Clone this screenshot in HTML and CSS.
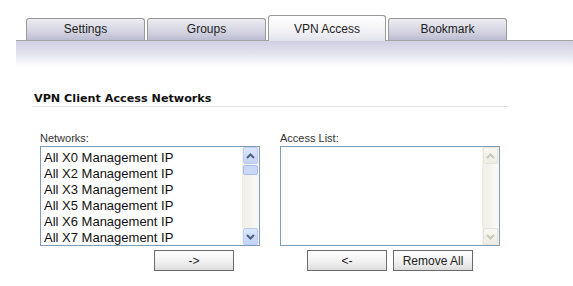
FILE: index.html
```html
<!DOCTYPE html>
<html lang="en">
<head>
    <meta charset="UTF-8">
    <title>VPN Access</title>
    <link rel="stylesheet" href="styles.css">
</head>
<body>
    <!-- Tab strip -->
    <div class="tabbar">
        <div class="tabs">
            <div class="tab">Settings</div>
            <div class="tab">Groups</div>
            <div class="tab active">VPN Access</div>
            <div class="tab">Bookmark</div>
        </div>
        <div class="band"></div>
    </div>

    <div class="section">
        <h3 class="section-title">VPN Client Access Networks</h3>

        <div class="columns">
            <div class="column">
                <div class="label">Networks:</div>
                <div class="listbox">
                    <div class="items">
                        <div class="item">All X0 Management IP</div>
                        <div class="item">All X2 Management IP</div>
                        <div class="item">All X3 Management IP</div>
                        <div class="item">All X5 Management IP</div>
                        <div class="item">All X6 Management IP</div>
                        <div class="item">All X7 Management IP</div>
                    </div>
                    <div class="scrollbar">
                        <div class="sb-btn"><svg width="9" height="6" viewBox="0 0 9 6"><path d="M1 5 L4.5 1.5 L8 5" fill="none" stroke="#4d6185" stroke-width="2"/></svg></div>
                        <div class="sb-track"><div class="sb-thumb"></div></div>
                        <div class="sb-btn"><svg width="9" height="6" viewBox="0 0 9 6"><path d="M1 1 L4.5 4.5 L8 1" fill="none" stroke="#4d6185" stroke-width="2"/></svg></div>
                    </div>
                </div>
                <div class="buttons left-buttons">
                    <button class="btn">-&gt;</button>
                </div>
            </div>

            <div class="column">
                <div class="label">Access List:</div>
                <div class="listbox">
                    <div class="items"></div>
                    <div class="scrollbar disabled">
                        <div class="sb-btn"><svg width="9" height="6" viewBox="0 0 9 6"><path d="M1 5 L4.5 1.5 L8 5" fill="none" stroke="#c9c7ba" stroke-width="2"/></svg></div>
                        <div class="sb-track"></div>
                        <div class="sb-btn"><svg width="9" height="6" viewBox="0 0 9 6"><path d="M1 1 L4.5 4.5 L8 1" fill="none" stroke="#c9c7ba" stroke-width="2"/></svg></div>
                    </div>
                </div>
                <div class="buttons right-buttons">
                    <button class="btn">&lt;-</button>
                    <button class="btn">Remove All</button>
                </div>
            </div>
        </div>
    </div>
</body>
</html>
```

FILE: styles.css
```css
body {
    margin: 0;
    font-family: "Liberation Sans", Arial, sans-serif;
    color: #222;
    background: #fff;
}
.tabbar {
    margin-left: 16px;
    padding-top: 15px;
}
.tabs {
    display: flex;
    align-items: flex-end;
    gap: 2px;
    padding-left: 10px;
    margin-bottom: -1px;
    position: relative;
    z-index: 1;
}
.tab {
    width: 117px;
    height: 21px;
    line-height: 21px;
    text-align: center;
    font-size: 12px;
    color: #222;
    border: 1px solid #9a9a9a;
    border-bottom: none;
    border-radius: 3px 3px 0 0;
    background: linear-gradient(#ececf0, #d4d4e2 60%, #bcbcd2);
    margin-bottom: 1px;
}
.tab.active {
    width: 116px;
    height: 22px;
    padding-top: 3px;
    line-height: 21px;
    margin-bottom: 0;
    background: linear-gradient(#ffffff, #f2f2f6 60%, #e2e2ec);
}
.band {
    height: 26px;
    border-top: 1px solid #a4a4a4;
    background: linear-gradient(#cfcfe2, #e2e2ee 45%, #ffffff);
}
.section {
    margin: 25px 0 0 32px;
    width: 476px;
}
.section-title {
    margin: 0;
    padding: 0 0 1px 2px;
    font-family: "DejaVu Sans", Verdana, sans-serif;
    font-size: 11.2px;
    font-weight: bold;
    color: #111;
    border-bottom: 1px solid #e2e2e2;
}
.columns {
    display: flex;
    gap: 20px;
    padding: 25px 0 0 8px;
}
.column {
    width: 220px;
}
.label {
    font-size: 11px;
    color: #333;
    margin-bottom: 2px;
}
.listbox {
    display: flex;
    height: 98px;
    border: 1px solid #7f9db9;
    background: #fff;
}
.items {
    flex: 1;
    padding: 3px 0 0 3px;
}
.item {
    font-size: 13px;
    line-height: 16px;
    color: #111;
}
.scrollbar {
    width: 17px;
    display: flex;
    flex-direction: column;
    background: #f4f3ec;
}
.sb-btn {
    height: 15px;
    margin: 0 1px;
    border: 1px solid #bccbee;
    border-radius: 2px;
    background: linear-gradient(#dce7fc, #c3d3f7);
    display: flex;
    align-items: center;
    justify-content: center;
}
.sb-track {
    flex: 1;
    background: linear-gradient(90deg, #eeede5, #fbfbf8);
}
.sb-thumb {
    height: 8px;
    margin: 1px 1px 0;
    border: 1px solid #a9bde8;
    border-radius: 2px;
    background: #cad8f8;
}
.scrollbar.disabled .sb-btn {
    border-color: #e6e4d8;
    background: linear-gradient(#f8f7f2, #eeece2);
}
.buttons {
    display: flex;
    gap: 6px;
    margin-top: 4px;
}
.left-buttons {
    padding-left: 114px;
}
.right-buttons {
    padding-left: 27px;
}
.btn {
    width: 80px;
    height: 21px;
    padding: 0;
    font-family: "Liberation Sans", Arial, sans-serif;
    font-size: 12px;
    color: #222;
    border: 1px solid #6a6a6a;
    border-radius: 0;
    background: linear-gradient(#ffffff, #f0f0f0 60%, #dcdcdc);
}
```
